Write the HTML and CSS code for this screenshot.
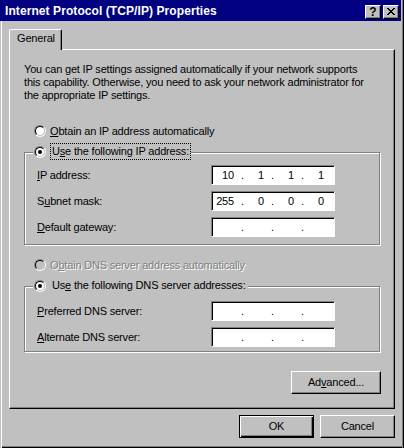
FILE: index.html
```html
<!DOCTYPE html>
<html>
<head>
<meta charset="utf-8">
<link rel="stylesheet" href="styles.css">
</head>
<body>
<div class="window">
  <div class="titlebar">
    <span class="title">Internet Protocol (TCP/IP) Properties</span>
    <div class="capbtns">
      <span class="capbtn help">?</span>
      <span class="capbtn close">
        <svg width="8" height="7" viewBox="0 0 8 7" shape-rendering="crispEdges">
          <path fill="#000" d="M0 0h2v1H0zM6 0h2v1H6zM1 1h2v1H1zM5 1h2v1H5zM2 2h4v1H2zM3 3h2v1H3zM2 4h4v1H2zM1 5h2v1H1zM5 5h2v1H5zM0 6h2v1H0zM6 6h2v1H6z"/>
        </svg>
      </span>
    </div>
  </div>
  <div class="client">
    <div class="tabstrip"><div class="tab">General</div></div>
    <div class="panel">
      <p class="intro">You can get IP settings assigned automatically if your network supports<br>this capability. Otherwise, you need to ask your network administrator for<br>the appropriate IP settings.</p>

      <div class="option opt-ip">
        <span class="radio"><span class="ring"></span></span>
        <span class="label"><u>O</u>btain an IP address automatically</span>
      </div>

      <div class="group group-ip">
        <div class="legend">
          <span class="radio"><span class="ring"><span class="dot"></span></span></span>
          <span class="label focus">U<u>s</u>e the following IP address:</span>
        </div>
        <div class="fields fields-ip">
          <span class="flabel"><u>I</u>P address:</span>
          <span class="ipbox"><span class="oct">10</span><span class="sep">.</span><span class="oct">1</span><span class="sep">.</span><span class="oct">1</span><span class="sep">.</span><span class="oct">1</span></span>
          <span class="flabel">S<u>u</u>bnet mask:</span>
          <span class="ipbox"><span class="oct">255</span><span class="sep">.</span><span class="oct">0</span><span class="sep">.</span><span class="oct">0</span><span class="sep">.</span><span class="oct">0</span></span>
          <span class="flabel"><u>D</u>efault gateway:</span>
          <span class="ipbox"><span class="oct"></span><span class="sep">.</span><span class="oct"></span><span class="sep">.</span><span class="oct"></span><span class="sep">.</span><span class="oct"></span></span>
        </div>
      </div>

      <div class="option opt-dns disabled">
        <span class="radio"><span class="ring"></span></span>
        <span class="label">O<u>b</u>tain DNS server address automatically</span>
      </div>

      <div class="group group-dns">
        <div class="legend">
          <span class="radio"><span class="ring"><span class="dot"></span></span></span>
          <span class="label">Us<u>e</u> the following DNS server addresses:</span>
        </div>
        <div class="fields fields-dns">
          <span class="flabel"><u>P</u>referred DNS server:</span>
          <span class="ipbox"><span class="oct"></span><span class="sep">.</span><span class="oct"></span><span class="sep">.</span><span class="oct"></span><span class="sep">.</span><span class="oct"></span></span>
          <span class="flabel"><u>A</u>lternate DNS server:</span>
          <span class="ipbox"><span class="oct"></span><span class="sep">.</span><span class="oct"></span><span class="sep">.</span><span class="oct"></span><span class="sep">.</span><span class="oct"></span></span>
        </div>
      </div>

      <div class="advrow">
        <span class="btn adv">Ad<u>v</u>anced...</span>
      </div>
    </div>
    <div class="footer">
      <span class="btn default">OK</span>
      <span class="btn">Cancel</span>
    </div>
  </div>
</div>
</body>
</html>
```

FILE: styles.css
```css
* { box-sizing: border-box; }

html, body {
  margin: 0;
  padding: 0;
  background: #c0c0c0;
}

body {
  font-family: "Liberation Sans", Arial, sans-serif;
  font-size: 11px;
  line-height: 13px;
  letter-spacing: -0.18px;
  color: #000;
}

u { text-decoration: underline; text-underline-offset: 1px; }

.window {
  width: 404px;
  height: 448px;
  background: #c0c0c0;
  overflow: hidden;
  box-shadow:
    inset 1px 0 0 #c0c0c0,
    inset 2px 0 0 #ffffff,
    inset -1px 0 0 #000000,
    inset -2px 0 0 #808080,
    inset 0 -1px 0 #000000,
    inset 0 -2px 0 #808080;
}

/* title bar */
.titlebar {
  width: 401px;
  height: 21px;
  background: #000080;
  display: flex;
  align-items: flex-start;
}

.title {
  color: #fff;
  font-weight: bold;
  font-size: 12px;
  line-height: 19px;
  padding: 2px 0 0 5px;
  letter-spacing: 0.08px;
  white-space: nowrap;
}

.capbtns {
  margin-left: auto;
  margin-top: 5px;
  margin-right: 2px;
  display: flex;
  gap: 2px;
}

.capbtn {
  width: 16px;
  height: 14px;
  background: #c0c0c0;
  border: 1px solid;
  border-color: #fff #000 #000 #fff;
  box-shadow: inset -1px -1px 0 #808080;
  display: flex;
  align-items: center;
  justify-content: center;
}

.capbtn.help {
  font-weight: bold;
  font-size: 12px;
  line-height: 12px;
  letter-spacing: 0;
  padding-bottom: 1px;
}

.capbtn.close svg { display: block; margin-top: -1px; }

/* client */
.client {
  padding: 0 9px 0 9px;
  display: flex;
  flex-direction: column;
}

.tabstrip {
  margin-top: 8px;
  display: flex;
}

.tab {
  position: relative;
  z-index: 1;
  width: 53px;
  height: 21px;
  margin-bottom: -1px;
  background: #c0c0c0;
  border-left: 1px solid #fff;
  border-top: 1px solid #fff;
  border-right: 1px solid #000;
  border-radius: 2px 2px 0 0;
  box-shadow: inset -1px 0 0 #808080;
  padding: 2px 0 0 7px;
}

.panel {
  width: 386px;
  height: 360px;
  border: 1px solid;
  border-color: #fff #000 #000 #fff;
  box-shadow: inset -1px -1px 0 #808080;
  display: flex;
  flex-direction: column;
  align-items: flex-start;
}

.intro {
  margin: 13px 0 0 14px;
  white-space: nowrap;
}

.option {
  display: flex;
  align-items: center;
  height: 16px;
  margin-left: 24px;
}

.opt-ip { margin-top: 21px; }
.opt-dns { margin-top: 12px; }

.option .label, .legend .label { margin-left: 4px; }

/* radio */
.radio {
  width: 12px;
  height: 12px;
  border-radius: 50%;
  border: 1px solid;
  border-color: #808080 #fff #fff #808080;
  display: flex;
  flex-shrink: 0;
}

.ring {
  flex: 1;
  border-radius: 50%;
  border: 1px solid;
  border-color: #000 #c0c0c0 #c0c0c0 #000;
  background: #fff;
  display: flex;
  align-items: center;
  justify-content: center;
}

.dot {
  width: 4px;
  height: 4px;
  border-radius: 50%;
  background: #000;
}

.disabled .ring { background: #c0c0c0; }
.disabled .label { color: #808080; text-shadow: 1px 1px 0 #fff; }

/* group boxes */
.group {
  margin-left: 14px;
  width: 356px;
  border: 1px solid #808080;
  box-shadow: inset 1px 1px 0 #fff, 1px 1px 0 #fff;
  display: flex;
  flex-direction: column;
  align-items: flex-start;
}

.group-ip { margin-top: 13px; padding-bottom: 7px; }
.group-dns { margin-top: 13px; padding-bottom: 4px; }

.legend {
  display: flex;
  align-items: center;
  height: 17px;
  margin: -10px 0 0 8px;
  padding-left: 1px;
  background: #c0c0c0;
}

.legend .label {
  height: 17px;
  line-height: 15px;
  padding: 0 1px;
  border: 1px solid transparent;
}

.legend .label.focus { border: 1px dotted #000; }

.fields {
  display: grid;
  grid-template-columns: 174px 124px;
  grid-auto-rows: 20px;
  row-gap: 6px;
  align-items: center;
  margin-left: 12px;
}

.fields-ip { margin-top: 5px; }
.fields-dns { margin-top: 7px; }

.ipbox {
  width: 124px;
  height: 20px;
  background: #fff;
  border: 1px solid;
  border-color: #808080 #fff #fff #808080;
  box-shadow: inset 1px 1px 0 #000;
  display: flex;
  align-items: center;
  padding-left: 2px;
}

.oct { width: 20px; text-align: right; }
.sep { width: 10px; text-align: right; }

/* buttons */
.advrow {
  align-self: stretch;
  display: flex;
  justify-content: flex-end;
  margin-top: 19px;
  padding-right: 13px;
}

.btn {
  width: 75px;
  height: 23px;
  background: #c0c0c0;
  border: 1px solid;
  border-color: #fff #000 #000 #fff;
  box-shadow: inset -1px -1px 0 #808080;
  display: flex;
  align-items: center;
  justify-content: center;
}

.btn.adv { width: 90px; }

.btn.default {
  border-color: #000;
  box-shadow: inset 1px 1px 0 #fff, inset -1px -1px 0 #000, inset -2px -2px 0 #808080;
}

.footer {
  display: flex;
  justify-content: flex-end;
  gap: 6px;
  margin-top: 6px;
}
```
